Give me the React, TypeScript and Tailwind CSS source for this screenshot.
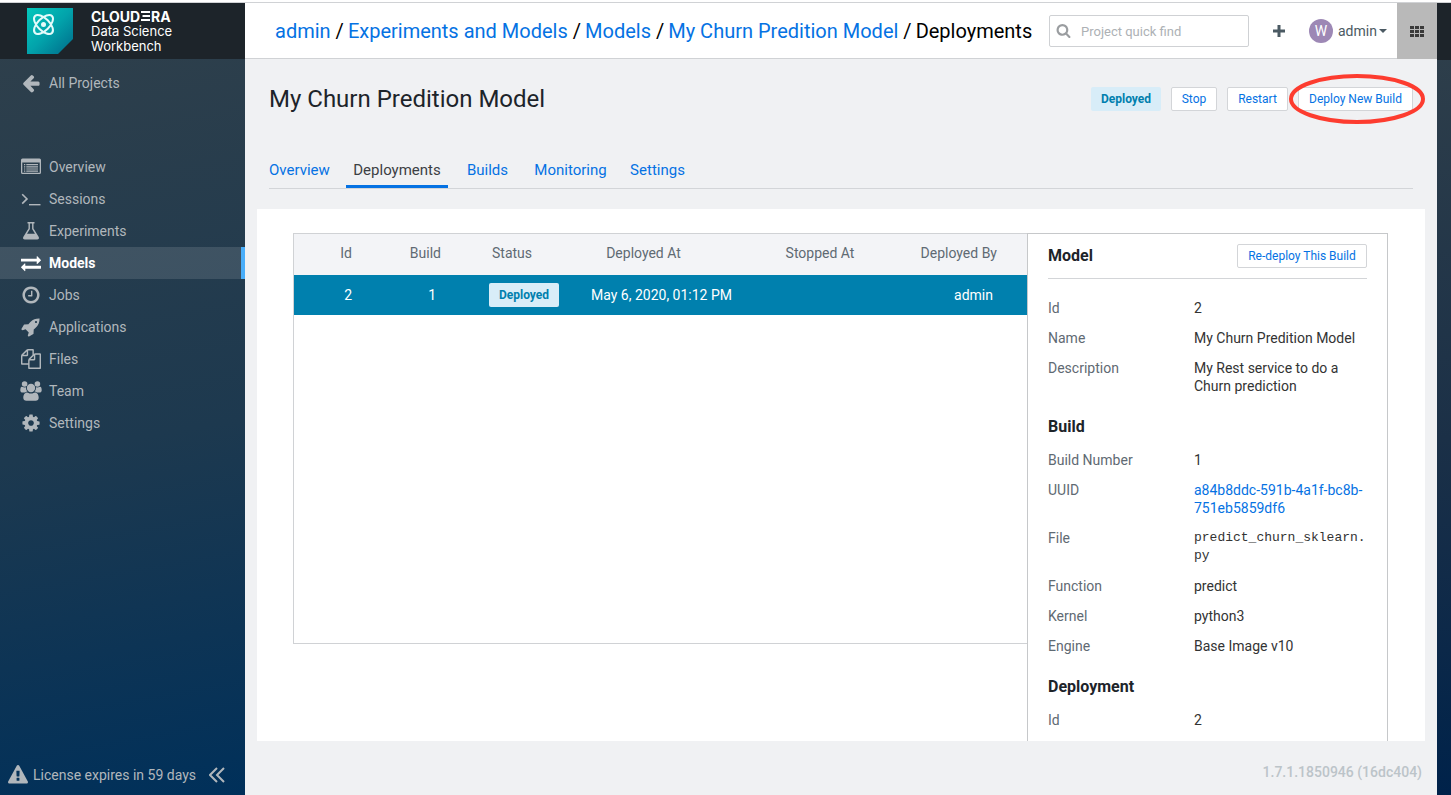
import type { ReactNode } from "react";

const glyphs = {
  arrowLeft:
    "M1664 896v128q0 53-32.5 90.5t-84.5 37.5h-704l293 294q38 36 38 90t-38 90l-75 76q-37 37-90 37-52 0-91-37l-651-652q-37-37-37-90 0-52 37-91l651-650q38-38 91-38 52 0 90 38l75 74q38 38 38 91t-38 91l-293 293h704q52 0 84.5 37.5t32.5 90.5z",
  cog: "M1152 896q0-106-75-181t-181-75-181 75-75 181 75 181 181 75 181-75 75-181zm512-109v222q0 12-8 23t-20 13l-185 28q-19 54-39 91 35 50 107 138 10 12 10 25t-9 23q-27 37-99 108t-94 71q-12 0-26-9l-138-108q-44 23-91 38-16 136-29 186-7 28-36 28h-222q-14 0-24.5-8.5t-11.5-21.5l-28-184q-49-16-90-37l-141 107q-10 9-25 9-14 0-25-11-126-114-165-168-7-10-7-23 0-12 8-23 15-21 51-66.5t54-70.5q-27-50-41-99l-183-27q-13-2-21-12.5t-8-23.5v-222q0-12 8-23t19-13l186-28q14-46 39-92-40-57-107-138-10-12-10-24 0-10 9-23 26-36 98.5-107.5t94.5-71.5q13 0 26 10l138 107q44-23 91-38 16-136 29-186 7-28 36-28h222q14 0 24.5 8.5t11.5 21.5l28 184q49 16 90 37l142-107q9-9 24-9 13 0 25 10 129 119 165 170 7 8 7 22 0 12-8 23-15 21-51 66.5t-54 70.5q26 50 41 98l183 28q13 2 21 12.5t8 23.5z",
  clock:
    "M1024 544v448q0 14-9 23t-23 9h-320q-14 0-23-9t-9-23v-64q0-14 9-23t23-9h224v-352q0-14 9-23t23-9h64q14 0 23 9t9 23zm416 352q0-148-73-273t-198-198-273-73-273 73-198 198-73 273 73 273 198 198 273 73 273-73 198-198 73-273zm224 0q0 209-103 385.5t-279.5 279.5-385.5 103-385.5-103-279.5-279.5-103-385.5 103-385.5 279.5-279.5 385.5-103 385.5 103 279.5 279.5 103 385.5z",
  rocket:
    "M1440 448q0-40-28-68t-68-28-68 28-28 68 28 68 68 28 68-28 28-68zm224-288q0 249-75.5 430.5t-253.5 360.5q-81 80-195 176l-20 379q-2 16-16 26l-384 224q-7 4-16 4-12 0-23-9l-64-64q-13-14-8-32l85-276-281-281-276 85q-3 1-9 1-14 0-23-9l-64-64q-17-19-5-39l224-384q10-14 26-16l379-20q96-114 176-195 188-187 358-258t431-71q14 0 24 9.5t10 22.5z",
  files:
    "M1696 384q40 0 68 28t28 68v1216q0 40-28 68t-68 28h-960q-40 0-68-28t-28-68v-288h-544q-40 0-68-28t-28-68v-672q0-40 20-88t48-76l408-408q28-28 76-48t88-20h416q40 0 68 28t28 68v328q68-40 128-40h416zm-544 213l-299 299h299v-299zm-640-384l-299 299h299v-299zm196 647l316-316v-416h-384v416q0 40-28 68t-68 28h-416v640h512v-256q0-40 20-88t48-76zm956 804v-1152h-384v416q0 40-28 68t-68 28h-416v640h896z",
  exchange:
    "M1792 1184v192q0 13-9.5 22.5t-22.5 9.5h-1376v192q0 13-9.5 22.5t-22.5 9.5q-12 0-24-10l-319-320q-9-9-9-22 0-14 9-23l320-320q9-9 23-9 13 0 22.5 9.5t9.5 22.5v192h1376q13 0 22.5 9.5t9.5 22.5zm0-544q0 14-9 23l-320 320q-9 9-23 9-13 0-22.5-9.5t-9.5-22.5v-192h-1376q-13 0-22.5-9.5t-9.5-22.5v-192q0-13 9.5-22.5t22.5-9.5h1376v-192q0-14 9-23t23-9q12 0 24 10l319 319q9 9 9 23z",
  warning:
    "M1024 1375v-190q0-14-9.5-23.5t-22.5-9.5h-192q-13 0-22.5 9.5t-9.5 23.5v190q0 14 9.5 23.5t22.5 9.5h192q13 0 22.5-9.5t9.5-23.5zm-2-374l18-459q0-12-10-19-13-11-24-11h-220q-11 0-24 11-10 7-10 21l17 457q0 10 10 16.5t24 6.5h185q14 0 23.5-6.5t10.5-16.5zm-14-934l768 1408q35 63-2 126-17 29-46.5 46t-63.5 17h-1536q-34 0-63.5-17t-46.5-46q-37-63-2-126l768-1408q17-31 47-49t65-18 65 18 47 49z",
  search:
    "M1216 832q0-185-131.5-316.5t-316.5-131.5-316.5 131.5-131.5 316.5 131.5 316.5 316.5 131.5 316.5-131.5 131.5-316.5zm512 832q0 52-38 90t-90 38q-54 0-90-38l-343-342q-179 124-399 124-143 0-273.5-55.5t-225-150-150-225-55.5-273.5 55.5-273.5 150-225 225-150 273.5-55.5 273.5 55.5 225 150 150 225 55.5 273.5q0 220-124 399l343 343q37 37 37 90z",
};

function Glyph({ d, className = "size-5" }: { d: string; className?: string }) {
  return (
    <svg viewBox="0 0 1792 1792" className={className} fill="currentColor" aria-hidden="true">
      <path d={d} />
    </svg>
  );
}

function Drawing({ children }: { children: ReactNode }) {
  return (
    <svg viewBox="0 0 20 20" className="size-5 overflow-visible" fill="currentColor" aria-hidden="true">
      {children}
    </svg>
  );
}

const listIcon = (
  <Drawing>
    <path fillRule="evenodd" d="M1.5 1.500h17A1.500 1.500 0 0 1 20 3v12.500a1.500 1.500 0 0 1-1.500 1.500h-17A1.500 1.500 0 0 1 0 15.500V3A1.500 1.500 0 0 1 1.500 1.500zM1.300 5.500v10.200h17.400V5.500z" />
    <path d="M3 7h1.300v1.200H3zm2.300 0H17v1.200H5.300zM3 9.200h1.300v1.200H3zm2.300 0H17v1.200H5.300zM3 11.400h1.300v1.200H3zm2.300 0H17v1.200H5.300zM3 13.600h1.300v1.200H3zm2.300 0H17v1.200H5.300z" />
  </Drawing>
);

const terminalIcon = (
  <Drawing>
    <path d="M1.200 5.200 6 9.900l-4.800 4.700" fill="none" stroke="currentColor" strokeWidth="1.600" />
    <path d="M8 15h11.500v1.400H8z" />
  </Drawing>
);

const flaskIcon = (
  <Drawing>
    <path
      fillRule="evenodd"
      d="M6.500 1h7v1.500h-1v5l5.100 8.300c.9 1.500.2 2.700-1.500 2.700H3.900c-1.700 0-2.400-1.200-1.500-2.700l5.100-8.300v-5h-1zM8.900 2.500v5.400L6 12.800h8l-2.900-4.900V2.500z"
    />
  </Drawing>
);

const teamIcon = (
  <Drawing>
    <circle cx="3.600" cy="3" r="2.800" />
    <circle cx="16.400" cy="3" r="2.800" />
    <path d="M4.900 6.300c0 1.900.6 3.300 1.600 4.300-1 .1-1.600.4-2.300 1H1.800C.2 11.600-.7 10.800-.7 9.500c0-2.200.5-3.700 1.500-3.700.5 0 1.500.9 4.100.5zM15.100 6.300c0 1.900-.6 3.300-1.600 4.300 1 .1 1.600.4 2.300 1h2.400c1.600 0 2.500-.8 2.500-2.100 0-2.200-.5-3.700-1.500-3.700-.5 0-1.500.9-4.100.5z" />
    <circle cx="10" cy="7" r="4.200" />
    <path d="M6.200 11.400c.7 0 1.700 1.100 3.800 1.100s3.100-1.100 3.800-1.100c2.600 0 3.900 2.500 3.900 5.300 0 1.900-1.200 3-3.100 3H5.400c-1.900 0-3.100-1.100-3.100-3 0-2.800 1.300-5.300 3.900-5.300z" />
  </Drawing>
);

const navItems: { label: string; icon: ReactNode; active?: boolean }[] = [
  { label: "Overview", icon: listIcon },
  { label: "Sessions", icon: terminalIcon },
  { label: "Experiments", icon: flaskIcon },
  { label: "Models", icon: <Glyph d={glyphs.exchange} />, active: true },
  { label: "Jobs", icon: <Glyph d={glyphs.clock} /> },
  { label: "Applications", icon: <Glyph d={glyphs.rocket} /> },
  { label: "Files", icon: <Glyph d={glyphs.files} /> },
  { label: "Team", icon: teamIcon },
  { label: "Settings", icon: <Glyph d={glyphs.cog} /> },
];

function Logo() {
  return (
    <svg viewBox="0 0 46 46" className="size-[46px]" role="img" aria-label="Cloudera">
      <defs>
        <linearGradient id="logo-fill" x1="0" y1="0" x2="1" y2="1">
          <stop offset="0" stopColor="#04c8bc" />
          <stop offset=".5" stopColor="#02a3ab" />
          <stop offset="1" stopColor="#006a89" />
        </linearGradient>
      </defs>
      <path d="M0 0h46v31L31 46H0z" fill="url(#logo-fill)" />
      <g fill="none" stroke="#e4fbfa" strokeWidth="2">
        <ellipse cx="16.500" cy="16.500" rx="12" ry="6" transform="rotate(45 16.500 16.500)" />
        <ellipse cx="16.500" cy="16.500" rx="12" ry="6" transform="rotate(-45 16.500 16.500)" />
      </g>
      <circle cx="16.500" cy="16.500" r="2.500" fill="#e4fbfa" />
    </svg>
  );
}

function Sidebar() {
  return (
    <aside className="flex w-[245px] shrink-0 flex-col bg-linear-[170deg] from-[#30404b] via-[#1d394f] via-55% to-[#00305a] text-[#b1b7bc]">
      <div className="flex h-14 shrink-0 items-center gap-[18px] bg-[#1d242a] pl-[27px] text-white">
        <Logo />
        <div className="font-['Inter',sans-serif] text-[13px] leading-[15px]">
          <div className="flex items-center text-sm leading-[15px] font-bold">
            <span>CLOUD</span>
            <svg viewBox="0 0 9 10" className="mx-px h-[10px] w-[9px]" aria-label="E" role="img">
              <path d="M0 0h9v2H0zM1.500 4H9v2H1.500zM0 8h9v2H0z" fill="white" />
            </svg>
            <span>RA</span>
          </div>
          <div>Data Science</div>
          <div>Workbench</div>
        </div>
      </div>
      <a href="#projects" className="mt-2 flex h-8 items-center gap-2 pl-[21px]">
        <Glyph d={glyphs.arrowLeft} />
        All Projects
      </a>
      <nav className="mt-[52px] flex flex-col">
        {navItems.map((item) => (
          <a
            key={item.label}
            href={"#" + item.label.toLowerCase()}
            className={
              item.active
                ? "flex h-8 items-center gap-2 border-r-4 border-[#49aefa] bg-white/12 pl-[21px] font-bold text-white"
                : "flex h-8 items-center gap-2 pl-[21px]"
            }
          >
            {item.icon}
            {item.label}
          </a>
        ))}
      </nav>
      <div className="mt-auto flex h-10 items-center pl-2">
        <Glyph d={glyphs.warning} />
        <span className="ml-[5px] w-[163px] whitespace-nowrap">License expires in 59 days</span>
        <button type="button" aria-label="Collapse sidebar" className="ml-[13px]">
          <svg viewBox="0 0 16 16" className="size-4" fill="none" stroke="currentColor" strokeWidth="2" aria-hidden="true">
            <path d="M8 1 1 8l7 7M15 1 8 8l7 7" />
          </svg>
        </button>
      </div>
    </aside>
  );
}

const crumbs = ["admin", "Experiments and Models", "Models", "My Churn Predition Model"];

function Header() {
  return (
    <header className="flex h-14 shrink-0 items-stretch border-b border-[#d0d2d5] bg-white">
      <nav aria-label="Breadcrumb" className="flex flex-1 items-center gap-1 pl-[30px] text-xl whitespace-nowrap text-black">
        {crumbs.map((crumb) => (
          <span key={crumb} className="flex gap-[5px]">
            <a href="#crumb" className="text-[#0572e3]">
              {crumb}
            </a>
            <span>/</span>
          </span>
        ))}
        <span>Deployments</span>
      </nav>
      <div className="flex items-center">
        <label className="flex h-8 w-[200px] items-center gap-[10px] rounded-xs border border-[#cfd1d4] pl-[6px] text-[#9a9da0]">
          <Glyph d={glyphs.search} className="size-[15px] shrink-0" />
          <input
            type="text"
            aria-label="Project quick find"
            placeholder="Project quick find"
            className="h-full w-full min-w-0 pt-px text-[13px] outline-none placeholder:text-[#adb1b5]"
          />
        </label>
        <button type="button" aria-label="Create" className="ml-6 text-[#4b5a63]">
          <svg viewBox="0 0 12 12" className="size-3" fill="currentColor" aria-hidden="true">
            <path d="M4.500 0h3v4.500H12v3H7.500V12h-3V7.500H0v-3h4.500z" />
          </svg>
        </button>
        <button type="button" className="ml-6 flex w-[78px] items-center text-[#4b5a63]">
          <span className="flex size-6 shrink-0 items-center justify-center rounded-full bg-[#9d88b5] text-white">W</span>
          <span className="ml-[5px]">admin</span>
          <svg viewBox="0 0 8 4" className="ml-[2px] h-1 w-2 shrink-0" fill="currentColor" aria-hidden="true">
            <path d="M0 0h8L4 4z" />
          </svg>
        </button>
      </div>
      <button type="button" aria-label="Apps" className="ml-[10px] -mb-px flex w-10 items-center justify-center bg-[#b9b9b9] text-[#3a3a3a]">
        <svg viewBox="0 0 14 11" className="h-[11px] w-[14px]" fill="currentColor" aria-hidden="true">
          <path d="M0 0h4v3H0zM5 0h4v3H5zM10 0h4v3h-4zM0 4h4v3H0zM5 4h4v3H5zM10 4h4v3h-4zM0 8h4v3H0zM5 8h4v3H5zM10 8h4v3h-4z" />
        </svg>
      </button>
    </header>
  );
}

function Badge() {
  return (
    <span className="inline-flex h-6 w-[70px] items-center justify-center rounded-xs bg-[#d8edf8] text-xs font-bold text-[#007fae]">
      Deployed
    </span>
  );
}

function ActionButton({ className, children }: { className: string; children: ReactNode }) {
  return (
    <button
      type="button"
      className={"h-6 rounded-xs border border-[#d3d5d8] bg-white text-xs whitespace-nowrap text-[#0572e3] " + className}
    >
      {children}
    </button>
  );
}

const tabs = [
  { label: "Overview", className: "w-[77px] pr-4 text-left text-[#0572e3]" },
  { label: "Deployments", className: "w-[102px] border-b-3 border-[#0572e3] text-center text-[#3c4043]" },
  { label: "Builds", className: "w-[79px] text-center text-[#0572e3]" },
  { label: "Monitoring", className: "w-[87px] text-center text-[#0572e3]" },
  { label: "Settings", className: "w-[87px] text-center text-[#0572e3]" },
];

function DeploymentTable() {
  return (
    <div className="h-[411px] min-w-0 flex-1 border border-r-0 border-[#d0d2d5]">
      <table className="w-full table-fixed">
        <colgroup>
          <col className="w-[68px]" />
          <col className="w-[91px]" />
          <col className="w-[115px]" />
          <col className="w-[187px]" />
          <col className="w-[130px]" />
          <col />
        </colgroup>
        <thead>
          <tr className="h-[41px] bg-[#f3f4f7] text-[#5f6a73]">
            <th className="pr-[10px] pb-[3px] text-right font-normal">Id</th>
            <th className="pr-3 pb-[3px] text-right font-normal">Build</th>
            <th className="pb-[3px] pl-[39px] text-left font-normal">Status</th>
            <th className="pr-9 pb-[3px] text-center font-normal">Deployed At</th>
            <th className="pb-[3px] text-center font-normal">Stopped At</th>
            <th className="pr-[30px] pb-[3px] text-right font-normal">Deployed By</th>
          </tr>
        </thead>
        <tbody>
          <tr className="h-10 bg-[#0080ae] text-white">
            <td className="pr-[10px] text-right">2</td>
            <td className="pr-[17px] text-right">1</td>
            <td className="pl-9">
              <div className="flex">
                <Badge />
              </div>
            </td>
            <td className="text-center whitespace-nowrap">May 6, 2020, 01:12 PM</td>
            <td />
            <td className="pr-[34px] text-right">admin</td>
          </tr>
        </tbody>
      </table>
    </div>
  );
}

function Field({ label, children }: { label: string; children: ReactNode }) {
  return (
    <div className="flex">
      <dt className="w-[146px] shrink-0 text-[#5f6a73]">{label}</dt>
      <dd className="min-w-0 flex-1 text-[#333]">{children}</dd>
    </div>
  );
}

function Details() {
  return (
    <aside className="w-[361px] shrink-0 border border-b-0 border-[#c6c8ca] px-5 leading-[18px]">
      <div className="flex h-[45px] items-center justify-between border-b border-[#d3d5d8]">
        <h2 className="text-base font-bold text-[#1d242a]">Model</h2>
        <ActionButton className="w-[130px]">Re-deploy This Build</ActionButton>
      </div>
      <dl className="mt-5 flex flex-col gap-3">
        <Field label="Id">2</Field>
        <Field label="Name">My Churn Predition Model</Field>
        <Field label="Description">
          My Rest service to do a<br />
          Churn prediction
        </Field>
      </dl>
      <h2 className="mt-[23px] text-base leading-[18px] font-bold text-[#1d242a]">Build</h2>
      <dl className="mt-[15px] flex flex-col gap-3">
        <Field label="Build Number">1</Field>
        <Field label="UUID">
          <a href="#build" className="text-[#0572e3]">
            a84b8ddc-591b-4a1f-bc8b-
            <br />
            751eb5859df6
          </a>
        </Field>
        <Field label="File">
          <span className="block font-['Liberation_Mono',monospace] text-[13px]">
            predict_churn_sklearn.
            <br />
            py
          </span>
        </Field>
        <Field label="Function">predict</Field>
        <Field label="Kernel">python3</Field>
        <Field label="Engine">Base Image v10</Field>
      </dl>
      <h2 className="mt-[23px] text-base leading-[18px] font-bold text-[#1d242a]">Deployment</h2>
      <dl className="mt-[15px]">
        <Field label="Id">2</Field>
      </dl>
    </aside>
  );
}

export default function App() {
  return (
    <div className="flex h-screen flex-col bg-white font-['Roboto',sans-serif] text-sm">
      <div className="h-[3px] shrink-0 border-b border-[#d0d2d5]" />
      <div className="flex min-h-0 flex-1">
        <Sidebar />
        <div className="flex min-w-0 flex-1 flex-col bg-[#f0f1f3]">
          <Header />
          <main className="flex min-h-0 flex-1 flex-col">
            <div className="mt-6 mr-6 ml-6 flex h-8 shrink-0 items-center justify-between">
              <h1 className="text-2xl text-[#1d242a]">My Churn Predition Model</h1>
              <div className="flex items-center gap-[10px]">
                <Badge />
                <ActionButton className="w-[46px]">Stop</ActionButton>
                <ActionButton className="w-[61px]">Restart</ActionButton>
                <div className="relative flex">
                  <ActionButton className="w-[115px]">Deploy New Build</ActionButton>
                  <svg
                    viewBox="0 0 136 50"
                    className="pointer-events-none absolute -top-[13px] -left-[9px] h-[50px] w-[136px]"
                    aria-hidden="true"
                  >
                    <ellipse cx="68" cy="25" rx="66" ry="23" fill="none" stroke="#fd3c2f" strokeWidth="4" />
                  </svg>
                </div>
              </div>
            </div>
            <nav className="mt-9 mr-6 ml-6 flex h-[38px] shrink-0 border-b border-[#d3d5d8] text-[15px]">
              {tabs.map((tab) => (
                <a key={tab.label} href={"#" + tab.label.toLowerCase()} className={"pt-[9px] " + tab.className}>
                  {tab.label}
                </a>
              ))}
            </nav>
            <section className="mx-3 mt-5 flex min-h-0 flex-1 overflow-hidden bg-white pt-6 pr-[37px] pl-9">
              <DeploymentTable />
              <Details />
            </section>
            <footer className="flex h-[54px] shrink-0 items-center justify-end pt-2 pr-[15px] font-medium text-[#bcc4c9]">
              1.7.1.1850946 (16dc404)
            </footer>
          </main>
        </div>
        <div className="flex w-[14px] shrink-0 flex-col bg-linear-to-b from-[#30404b] via-[#1b3047] via-55% to-[#00224a]">
          <div className="h-[57px] bg-[#1d242a]" />
        </div>
      </div>
    </div>
  );
}
